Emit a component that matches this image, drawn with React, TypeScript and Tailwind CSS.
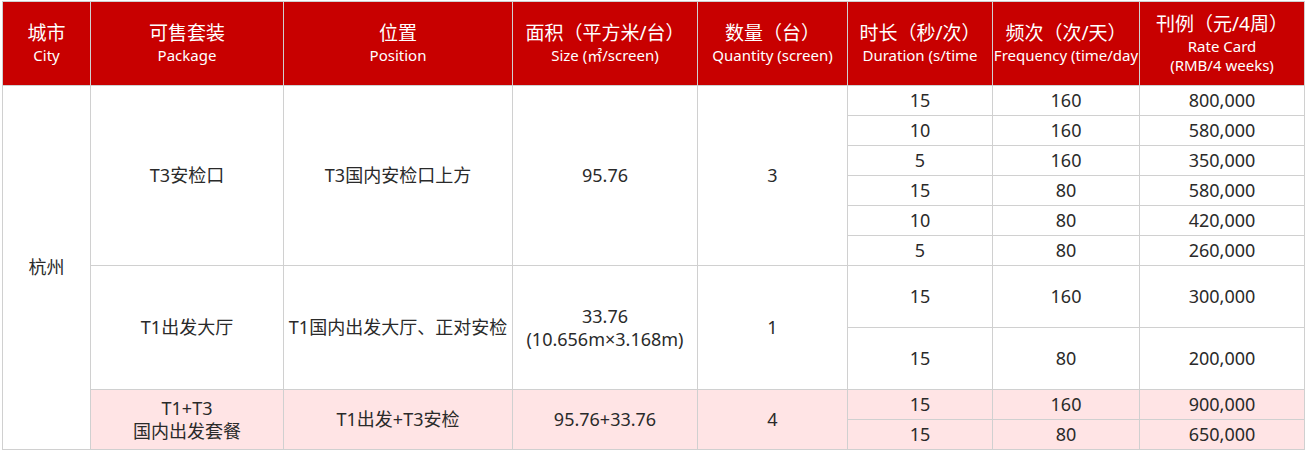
const font = { fontFamily: '"Noto Sans", "Noto Sans CJK SC", sans-serif' };

type Row = { dur: string; freq: string; price: string };

const t3Rows: Row[] = [
  { dur: "15", freq: "160", price: "800,000" },
  { dur: "10", freq: "160", price: "580,000" },
  { dur: "5", freq: "160", price: "350,000" },
  { dur: "15", freq: "80", price: "580,000" },
  { dur: "10", freq: "80", price: "420,000" },
  { dur: "5", freq: "80", price: "260,000" },
];

const t1Rows: Row[] = [
  { dur: "15", freq: "160", price: "300,000" },
  { dur: "15", freq: "80", price: "200,000" },
];

const comboRows: Row[] = [
  { dur: "15", freq: "160", price: "900,000" },
  { dur: "15", freq: "80", price: "650,000" },
];

const td = "border border-[#d0d0d0] text-center align-middle p-0 leading-[23px]";
const th = "border border-[#d0d0d0] bg-[#c80000] text-white font-normal text-center align-middle p-0 overflow-hidden whitespace-nowrap";

function Head({ zh, en, en2 }: { zh: string; en: string; en2?: string }) {
  return (
    <th className={th}>
      <div className="text-[19px] leading-[23px]">{zh}</div>
      <div className="text-[15px] leading-[20px]">{en}</div>
      {en2 && <div className="text-[15px] leading-[19px]">{en2}</div>}
    </th>
  );
}

export default function App() {
  return (
    <div className="pl-[2px] pt-px bg-white min-h-screen" style={font}>
      <table className="table-fixed border-collapse w-[1302px] text-[18px] text-[#2a2a2a]">
        <colgroup>
          <col className="w-[88px]" />
          <col className="w-[193px]" />
          <col className="w-[229px]" />
          <col className="w-[185px]" />
          <col className="w-[150px]" />
          <col className="w-[145px]" />
          <col className="w-[147px]" />
          <col className="w-[165px]" />
        </colgroup>
        <thead>
          <tr className="h-[84px]">
            <Head zh="城市" en="City" />
            <Head zh="可售套装" en="Package" />
            <Head zh="位置" en="Position" />
            <Head zh="面积（平方米/台）" en="Size (㎡/screen)" />
            <Head zh="数量（台）" en="Quantity (screen)" />
            <Head zh="时长（秒/次）" en="Duration (s/time" />
            <Head zh="频次（次/天）" en="Frequency (time/day" />
            <Head zh="刊例（元/4周）" en="Rate Card" en2="(RMB/4 weeks)" />
          </tr>
        </thead>
        <tbody>
          {t3Rows.map((r, i) => (
            <tr key={"t3" + i} className="h-[30px]">
              {i === 0 && (
                <>
                  <td rowSpan={10} className={td}>杭州</td>
                  <td rowSpan={6} className={td}>T3安检口</td>
                  <td rowSpan={6} className={td}>T3国内安检口上方</td>
                  <td rowSpan={6} className={td}>95.76</td>
                  <td rowSpan={6} className={td}>3</td>
                </>
              )}
              <td className={td}>{r.dur}</td>
              <td className={td}>{r.freq}</td>
              <td className={td}>{r.price}</td>
            </tr>
          ))}
          {t1Rows.map((r, i) => (
            <tr key={"t1" + i} className="h-[62px]">
              {i === 0 && (
                <>
                  <td rowSpan={2} className={td}>T1出发大厅</td>
                  <td rowSpan={2} className={`${td} whitespace-nowrap`}>T1国内出发大厅、正对安检</td>
                  <td rowSpan={2} className={td}>
                    <div>33.76</div>
                    <div>(10.656m×3.168m)</div>
                  </td>
                  <td rowSpan={2} className={td}>1</td>
                </>
              )}
              <td className={td}>{r.dur}</td>
              <td className={td}>{r.freq}</td>
              <td className={td}>{r.price}</td>
            </tr>
          ))}
          {comboRows.map((r, i) => (
            <tr key={"c" + i} className="h-[30px] bg-[#ffe4e5]">
              {i === 0 && (
                <>
                  <td rowSpan={2} className={td}>
                    <div>T1+T3</div>
                    <div>国内出发套餐</div>
                  </td>
                  <td rowSpan={2} className={td}>T1出发+T3安检</td>
                  <td rowSpan={2} className={td}>95.76+33.76</td>
                  <td rowSpan={2} className={td}>4</td>
                </>
              )}
              <td className={td}>{r.dur}</td>
              <td className={td}>{r.freq}</td>
              <td className={td}>{r.price}</td>
            </tr>
          ))}
        </tbody>
      </table>
    </div>
  );
}
